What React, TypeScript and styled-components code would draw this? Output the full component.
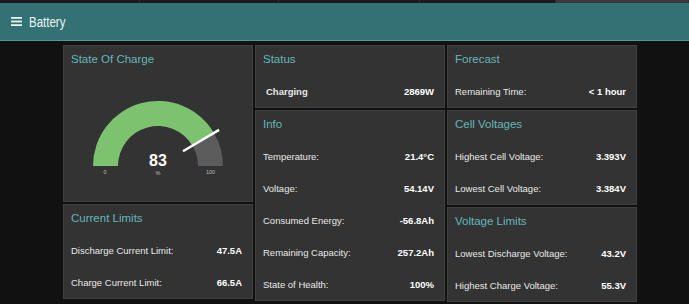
import styled, {createGlobalStyle} from "styled-components";

const GlobalStyle = createGlobalStyle`
    html, body {
        margin: 0;
        padding: 0;
        background: #111111;
    }
    body {
        font-family: "Liberation Sans", Arial, sans-serif;
        overflow: hidden;
    }
`;

type Row = {label: string; value: string};

const info: Row[] = [
    {label: "Temperature:", value: "21.4°C"},
    {label: "Voltage:", value: "54.14V"},
    {label: "Consumed Energy:", value: "-56.8Ah"},
    {label: "Remaining Capacity:", value: "257.2Ah"},
    {label: "State of Health:", value: "100%"},
];

const currentLimits: Row[] = [
    {label: "Discharge Current Limit:", value: "47.5A"},
    {label: "Charge Current Limit:", value: "66.5A"},
];

const cellVoltages: Row[] = [
    {label: "Highest Cell Voltage:", value: "3.393V"},
    {label: "Lowest Cell Voltage:", value: "3.384V"},
];

const voltageLimits: Row[] = [
    {label: "Lowest Discharge Voltage:", value: "43.2V"},
    {label: "Highest Charge Voltage:", value: "55.3V"},
];

// point on the half ring, v from 0 (left) to 1 (right)
const arcPoint = (v: number, r: number, cx = 80, cy = 72) => {
    const a = Math.PI * v;
    return [cx - r * Math.cos(a), cy - r * Math.sin(a)];
};

const Gauge = ({value}: {value: number}) => {
    const v = value / 100;
    const [ox, oy] = arcPoint(v, 65);
    const [ix, iy] = arcPoint(v, 40);
    const [n1x, n1y] = arcPoint(v, 29);
    const [n2x, n2y] = arcPoint(v, 71);
    return (
        <GaugeSvg width="160" height="100" viewBox="0 0 160 100">
            <path
                d={`M 15 72 A 65 65 0 0 1 ${ox} ${oy} L ${ix} ${iy} A 40 40 0 0 0 40 72 Z`}
                fill="#7cc26f"
            />
            <path
                d={`M ${ox} ${oy} A 65 65 0 0 1 145 72 L 120 72 A 40 40 0 0 0 ${ix} ${iy} Z`}
                fill="#5c5c5c"
            />
            <line x1={n1x} y1={n1y} x2={n2x} y2={n2y} stroke="#ffffff" strokeWidth="2.4" strokeLinecap="butt"/>
            <text x="80" y="72" textAnchor="middle" fill="#ffffff" fontSize="16" fontWeight="700">{value}</text>
            <text x="80" y="81" textAnchor="middle" fill="#bdbdbd" fontSize="5.5">%</text>
            <text x="27" y="80" textAnchor="middle" fill="#bdbdbd" fontSize="5.5">0</text>
            <text x="132.5" y="80" textAnchor="middle" fill="#bdbdbd" fontSize="5.5">100</text>
        </GaugeSvg>
    );
};

const DataCard = ({title, rows}: {title: string; rows: Row[]}) => (
    <Card>
        <CardTitle>{title}</CardTitle>
        {rows.map((r) => (
            <DataRow key={r.label}>
                <span>{r.label}</span>
                <Value>{r.value}</Value>
            </DataRow>
        ))}
    </Card>
);

const App = () => {
    return (
        <Page>
            <GlobalStyle/>
            <TabStrip>
                <Tab $w={140}/>
                <Tab $w={139}/>
                <Tab $w={141}/>
                <Tab $w={136}/>
                <Tab $active/>
            </TabStrip>
            <Header>
                <svg width="11" height="9" viewBox="0 0 11 9">
                    <rect x="0" y="0" width="11" height="1.8" fill="#e8f2f2"/>
                    <rect x="0" y="3.6" width="11" height="1.8" fill="#e8f2f2"/>
                    <rect x="0" y="7.2" width="11" height="1.8" fill="#e8f2f2"/>
                </svg>
                <HeaderTitle>Battery</HeaderTitle>
            </Header>
            <Board>
                <Column>
                    <Card $height={157}>
                        <CardTitle>State Of Charge</CardTitle>
                        <GaugeBody>
                            <Gauge value={83}/>
                        </GaugeBody>
                    </Card>
                    <DataCard title="Current Limits" rows={currentLimits}/>
                </Column>
                <Column>
                    <Card>
                        <CardTitle>Status</CardTitle>
                        <DataRow $strong>
                            <span>Charging</span>
                            <Value>2869W</Value>
                        </DataRow>
                    </Card>
                    <DataCard title="Info" rows={info}/>
                </Column>
                <Column>
                    <Card>
                        <CardTitle>Forecast</CardTitle>
                        <DataRow>
                            <span>Remaining Time:</span>
                            <Value>&lt; 1 hour</Value>
                        </DataRow>
                    </Card>
                    <DataCard title="Cell Voltages" rows={cellVoltages}/>
                    <DataCard title="Voltage Limits" rows={voltageLimits}/>
                </Column>
            </Board>
        </Page>
    );
};

const Page = styled.div`
    width: 689px;
    height: 304px;
    background: #111111;
    overflow: hidden;
`;

const TabStrip = styled.div`
    display: flex;
    height: 3px;
    background: #1b1b1b;
`;

const Tab = styled.div<{$w?: number; $active?: boolean}>`
    ${(p) => (p.$w ? `width: ${p.$w}px;` : "flex: 1;")}
    height: 100%;
    box-sizing: border-box;
    border-right: 1px solid #2e2e2e;
    background: ${(p) => (p.$active ? "#3a3a3a" : "#1b1b1b")};
`;

const Header = styled.div`
    display: flex;
    align-items: center;
    gap: 7px;
    height: 37px;
    padding: 0 0 0 11px;
    background: #347174;
    border-bottom: 1px solid #5b9396;
`;

const HeaderTitle = styled.div`
    color: #eef6f6;
    font-size: 14px;
    transform: scaleX(0.82);
    transform-origin: left center;
`;

const Board = styled.div`
    display: flex;
    align-items: flex-start;
    gap: 2px;
    padding: 4px 0 0 63px;
`;

const Column = styled.div`
    display: flex;
    flex-direction: column;
    gap: 2px;
    width: 190px;
`;

const Card = styled.div<{$height?: number}>`
    box-sizing: border-box;
    ${(p) => (p.$height ? `height: ${p.$height}px;` : "")}
    background: #333333;
    border: 1px solid #404040;
    display: flex;
    flex-direction: column;
`;

const CardTitle = styled.div`
    height: 29px;
    line-height: 27px;
    padding-left: 7px;
    color: #63b7ba;
    font-size: 11.5px;
`;

const DataRow = styled.div<{$strong?: boolean}>`
    display: flex;
    align-items: center;
    justify-content: space-between;
    height: 32px;
    padding: 0 10px 0 ${(p) => (p.$strong ? "10px" : "7px")};
    color: #e8e8e8;
    font-size: 9.5px;
    font-weight: ${(p) => (p.$strong ? 700 : 400)};
`;

const Value = styled.span`
    color: #ffffff;
    font-weight: 700;
`;

const GaugeBody = styled.div`
    display: flex;
    justify-content: center;
    padding-top: 19px;
`;

const GaugeSvg = styled.svg`
    display: block;
    font-family: "Liberation Sans", Arial, sans-serif;
`;

export default App;
